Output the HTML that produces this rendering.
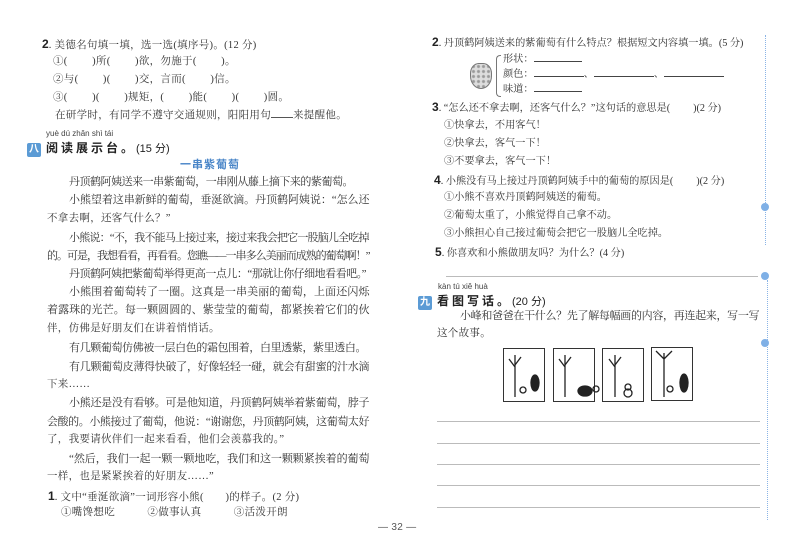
<!DOCTYPE html>
<html><head><meta charset="utf-8">
<style>
body{margin:0;width:800px;height:553px;background:#fff;position:relative;overflow:hidden;font-family:"Liberation Serif","Noto Serif CJK SC","Noto Sans CJK SC",serif;color:#333;}
.l{position:absolute;white-space:nowrap;font-size:10.5px;line-height:14px;letter-spacing:0.3px;}
.j{text-align:justify;text-align-last:justify;letter-spacing:-1.5px;font-size:11px;}
.r{letter-spacing:0;font-size:10.2px;}
.b{font-family:"Liberation Sans",sans-serif;font-weight:bold;color:#222;font-size:12px;letter-spacing:0;}
.py{position:absolute;font-family:"Liberation Sans",sans-serif;font-size:8px;color:#444;white-space:nowrap;}
.h{position:absolute;font-family:"Liberation Sans","Noto Sans CJK SC",sans-serif;font-weight:bold;font-size:12px;letter-spacing:3px;white-space:nowrap;color:#222;}
.tag{display:inline-block;width:14px;height:14px;background:#5b9bd5;color:#fff;font-size:10px;text-align:center;line-height:14px;letter-spacing:0;margin-right:5px;border-radius:2px;}
.ln{position:absolute;height:1px;background:#bbb;}
.pic{position:absolute;width:42px;height:54px;border:1px solid #333;box-sizing:border-box;}
.dot{position:absolute;width:8px;height:8px;border-radius:50%;background:#7fb0e6;left:761px;}
</style></head><body>
<!-- LEFT PAGE -->
<div class="l" style="left:42px;top:37px"><span class="b">2</span>. 美德名句填一填，选一选(填序号)。(12 分)</div>
<div class="l" style="left:53px;top:55px">①(　　 )所(　　 )欲，勿施于(　　 )。</div>
<div class="l" style="left:53px;top:73px">②与(　　 )(　　 )交，言而(　　 )信。</div>
<div class="l" style="left:53px;top:91px">③(　　 )(　　 )规矩，(　　 )能(　　 )(　　 )圆。</div>
<div class="l" style="left:55px;top:109px">在研学时，有同学不遵守交通规则，阳阳用句<span style="display:inline-block;width:22px;border-bottom:1px solid #555"></span>来提醒他。</div>
<div class="py" style="left:46px;top:129px">yuè dú zhǎn shì tái</div>
<div class="h" style="left:27px;top:139px"><span class="tag">八</span>阅读展示台。<span style="font-weight:normal;letter-spacing:0;font-size:11px">(15 分)</span></div>
<div class="h" style="left:180px;top:156px;color:#4a86c8;font-size:11px;letter-spacing:1px">一串紫葡萄</div>
<div class="l j" style="left:69px;top:175px;width:283px">丹顶鹤阿姨送来一串紫葡萄，一串刚从藤上摘下来的紫葡萄。</div>
<div class="l j" style="left:69px;top:193px;width:299px">小熊望着这串新鲜的葡萄，垂涎欲滴。丹顶鹤阿姨说：“怎么还</div>
<div class="l" style="left:47px;top:212px">不拿去啊，还客气什么？”</div>
<div class="l j" style="left:69px;top:231px;width:299px">小熊说：“不，我不能马上接过来，接过来我会把它一股脑儿全吃掉</div>
<div class="l j" style="left:47px;top:249px;width:321px;letter-spacing:-2.5px">的。可是，我想看看，再看看。您瞧——一串多么美丽而成熟的葡萄啊！”</div>
<div class="l j" style="left:69px;top:267px;width:296px">丹顶鹤阿姨把紫葡萄举得更高一点儿：“那就让你仔细地看看吧。”</div>
<div class="l j" style="left:69px;top:285px;width:299px">小熊围着葡萄转了一圈。这真是一串美丽的葡萄，上面还闪烁</div>
<div class="l j" style="left:47px;top:303px;width:321px">着露珠的光芒。每一颗圆圆的、紫莹莹的葡萄，都紧挨着它们的伙</div>
<div class="l" style="left:47px;top:322px">伴，仿佛是好朋友们在讲着悄悄话。</div>
<div class="l j" style="left:69px;top:341px;width:296px">有几颗葡萄仿佛被一层白色的霜包围着，白里透紫，紫里透白。</div>
<div class="l j" style="left:69px;top:360px;width:299px">有几颗葡萄皮薄得快破了，好像轻轻一碰，就会有甜蜜的汁水滴</div>
<div class="l" style="left:47px;top:378px">下来……</div>
<div class="l j" style="left:69px;top:396px;width:299px">小熊还是没有看够。可是他知道，丹顶鹤阿姨举着紫葡萄，脖子</div>
<div class="l j" style="left:47px;top:415px;width:321px">会酸的。小熊接过了葡萄，他说：“谢谢您，丹顶鹤阿姨，这葡萄太好</div>
<div class="l" style="left:47px;top:433px">了，我要请伙伴们一起来看看，他们会羡慕我的。”</div>
<div class="l j" style="left:69px;top:452px;width:299px">“然后，我们一起一颗一颗地吃，我们和这一颗颗紧挨着的葡萄</div>
<div class="l" style="left:47px;top:470px">一样，也是紧紧挨着的好朋友……”</div>
<div class="l" style="left:48px;top:489px"><span class="b">1</span>. 文中“垂涎欲滴”一词形容小熊(　　)的样子。(2 分)</div>
<div class="l" style="left:61px;top:506px">①嘴馋想吃　　　②做事认真　　　③活泼开朗</div>
<div class="l" style="left:378px;top:521px;font-family:'Liberation Sans',sans-serif;font-size:10px;color:#555">— 32 —</div>
<!-- RIGHT PAGE -->
<div class="l r" style="left:432px;top:35px"><span class="b">2</span>. 丹顶鹤阿姨送来的紫葡萄有什么特点？根据短文内容填一填。(5 分)</div>
<div style="position:absolute;left:470px;top:63px;width:20px;height:24px;border-radius:40% 40% 50% 50%;background:radial-gradient(circle,#999 1px,#ddd 2px) 0 0/5px 5px;border:1px solid #777"></div>
<div style="position:absolute;left:496px;top:55px;width:4px;height:40px;border:1px solid #777;border-right:none;border-radius:4px 0 0 4px"></div>
<div class="l r" style="left:503px;top:53px">形状：<span style="display:inline-block;width:48px;border-bottom:1px solid #444"></span></div>
<div class="l r" style="left:503px;top:68px">颜色：<span style="display:inline-block;width:50px;border-bottom:1px solid #444"></span>、<span style="display:inline-block;width:60px;border-bottom:1px solid #444"></span>、<span style="display:inline-block;width:60px;border-bottom:1px solid #444"></span></div>
<div class="l r" style="left:503px;top:83px">味道：<span style="display:inline-block;width:48px;border-bottom:1px solid #444"></span></div>
<div class="l r" style="left:432px;top:100px"><span class="b">3</span>. “怎么还不拿去啊，还客气什么？”这句话的意思是(　　 )(2 分)</div>
<div class="l r" style="left:444px;top:119px">①快拿去，不用客气！</div>
<div class="l r" style="left:444px;top:137px">②快拿去，客气一下！</div>
<div class="l r" style="left:444px;top:155px">③不要拿去，客气一下！</div>
<div class="l r" style="left:434px;top:173px"><span class="b">4</span>. 小熊没有马上接过丹顶鹤阿姨手中的葡萄的原因是(　　 )(2 分)</div>
<div class="l r" style="left:444px;top:191px">①小熊不喜欢丹顶鹤阿姨送的葡萄。</div>
<div class="l r" style="left:444px;top:209px">②葡萄太重了，小熊觉得自己拿不动。</div>
<div class="l r" style="left:444px;top:227px">③小熊担心自己接过葡萄会把它一股脑儿全吃掉。</div>
<div class="l r" style="left:435px;top:245px"><span class="b">5</span>. 你喜欢和小熊做朋友吗？为什么？(4 分)</div>
<div class="ln" style="left:446px;top:276px;width:312px"></div>
<div class="py" style="left:438px;top:282px">kàn tú xiě huà</div>
<div class="h" style="left:418px;top:292px"><span class="tag">九</span>看图写话。<span style="font-weight:normal;letter-spacing:0;font-size:11px">(20 分)</span></div>
<div class="l j" style="left:460px;top:309px;width:298px">小峰和爸爸在干什么？先了解每幅画的内容，再连起来，写一写</div>
<div class="l" style="left:437px;top:327px">这个故事。</div>
<div class="pic" style="left:503px;top:348px"></div>
<div class="pic" style="left:553px;top:348px"></div>
<div class="pic" style="left:602px;top:348px"></div>
<div class="pic" style="left:651px;top:347px"></div>
<svg style="position:absolute;left:500px;top:345px" width="200" height="60" stroke="#222" fill="none" stroke-width="1.3">
<path d="M15 10 V52 M15 22 L9 14 M15 20 L21 12"/><path d="M65 10 V52 M65 22 L59 14 M65 20 L71 12"/><path d="M115 10 V52 M115 22 L109 14 M115 20 L121 12"/><path d="M164 8 V52 M164 14 L156 6 M164 14 L172 6"/>
<ellipse cx="35" cy="38" rx="4" ry="8" fill="#222"/><ellipse cx="85" cy="46" rx="7" ry="5" fill="#222"/><ellipse cx="184" cy="38" rx="4" ry="9" fill="#222"/>
<circle cx="23" cy="45" r="3"/><circle cx="96" cy="44" r="3"/><circle cx="128" cy="42" r="3"/><circle cx="128" cy="48" r="4"/><circle cx="170" cy="44" r="3"/>
</svg>
<div class="ln" style="left:437px;top:421px;width:323px"></div>
<div class="ln" style="left:437px;top:443px;width:323px"></div>
<div class="ln" style="left:437px;top:464px;width:323px"></div>
<div class="ln" style="left:437px;top:485px;width:323px"></div>
<div class="ln" style="left:437px;top:507px;width:323px"></div>
<div style="position:absolute;left:765px;top:35px;height:210px;border-left:1px dotted #8ab4e6"></div>
<div style="position:absolute;left:767px;top:280px;height:240px;border-left:1px dotted #8ab4e6"></div>
<div class="dot" style="top:203px"></div>
<div class="dot" style="top:272px"></div>
<div class="dot" style="top:339px"></div>
</body></html>
